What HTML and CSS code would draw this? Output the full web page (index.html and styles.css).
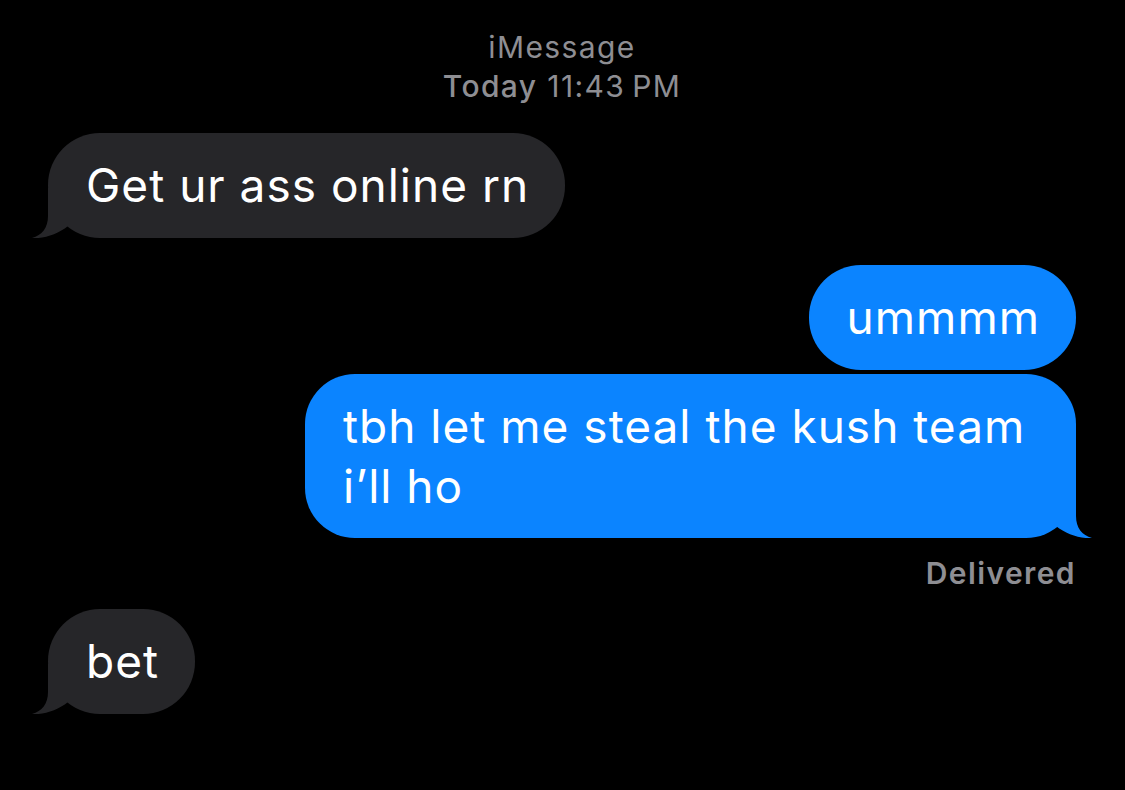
FILE: index.html
```html
<!DOCTYPE html>
<html>
<head>
<meta charset="utf-8">
<link rel="stylesheet" href="styles.css">
</head>
<body>
<div class="thread">
  <div class="header">
    <div class="service">iMessage</div>
    <div class="time"><span class="day">Today</span> 11:43&#8201;PM</div>
  </div>

  <div class="row in gap-lg">
    <div class="bubble gray">Get ur ass online rn
      <svg class="tail tail-left" viewBox="0 0 50 50" width="50" height="50"><path d="M16,0 L16,28 C16,40 10,47 0,50 C12,51 26,46 36,38 L36,0 Z"/></svg>
    </div>
  </div>

  <div class="row out gap-lg">
    <div class="bubble blue">ummmm</div>
  </div>

  <div class="row out gap-sm">
    <div class="bubble blue wide">tbh let me steal the kush team i’ll ho
      <svg class="tail tail-right" viewBox="0 0 50 50" width="50" height="50"><path d="M16,0 L16,28 C16,40 10,47 0,50 C12,51 26,46 36,38 L36,0 Z"/></svg>
    </div>
  </div>

  <div class="status">Delivered</div>

  <div class="row in gap-status">
    <div class="bubble gray">bet
      <svg class="tail tail-left" viewBox="0 0 50 50" width="50" height="50"><path d="M16,0 L16,28 C16,40 10,47 0,50 C12,51 26,46 36,38 L36,0 Z"/></svg>
    </div>
  </div>
</div>
</body>
</html>
```
FILE: styles.css
```css
html, body {
  margin: 0;
  padding: 0;
  background: #000;
}
body {
  font-family: Inter, "Liberation Sans", sans-serif;
  color: #fff;
  width: 1125px;
  height: 790px;
  overflow: hidden;
}
.thread {
  display: flex;
  flex-direction: column;
  padding: 28px 49px 0 48px;
}
.header {
  text-align: center;
  color: #8e8e93;
  font-size: 30px;
  line-height: 39px;
  letter-spacing: 1.4px;
}
.day {
  font-weight: 500;
}
.row {
  display: flex;
}
.row.in { justify-content: flex-start; }
.row.out { justify-content: flex-end; }
.gap-lg { margin-top: 27px; }
.gap-sm { margin-top: 4px; }
.gap-status { margin-top: 19px; }
.bubble {
  position: relative;
  font-size: 46px;
  line-height: 60px;
  letter-spacing: 1px;
  padding: 22px 36px 23px 38px;
  border-radius: 52px;
}
.bubble.wide {
  max-width: 697px;
  border-radius: 50px;
  padding: 22px 36px 22px 38px;
}
.gray {
  background: #262629;
  fill: #262629;
}
.blue {
  background: #0b84ff;
  fill: #0b84ff;
}
.tail {
  position: absolute;
  bottom: 0;
  display: block;
}
.tail-left {
  left: -16px;
}
.tail-right {
  right: -16px;
  transform: scaleX(-1);
}
.status {
  align-self: flex-end;
  margin-top: 18px;
  font-size: 30px;
  line-height: 34px;
  font-weight: 600;
  letter-spacing: 1.4px;
  color: #8e8e93;
}
```
